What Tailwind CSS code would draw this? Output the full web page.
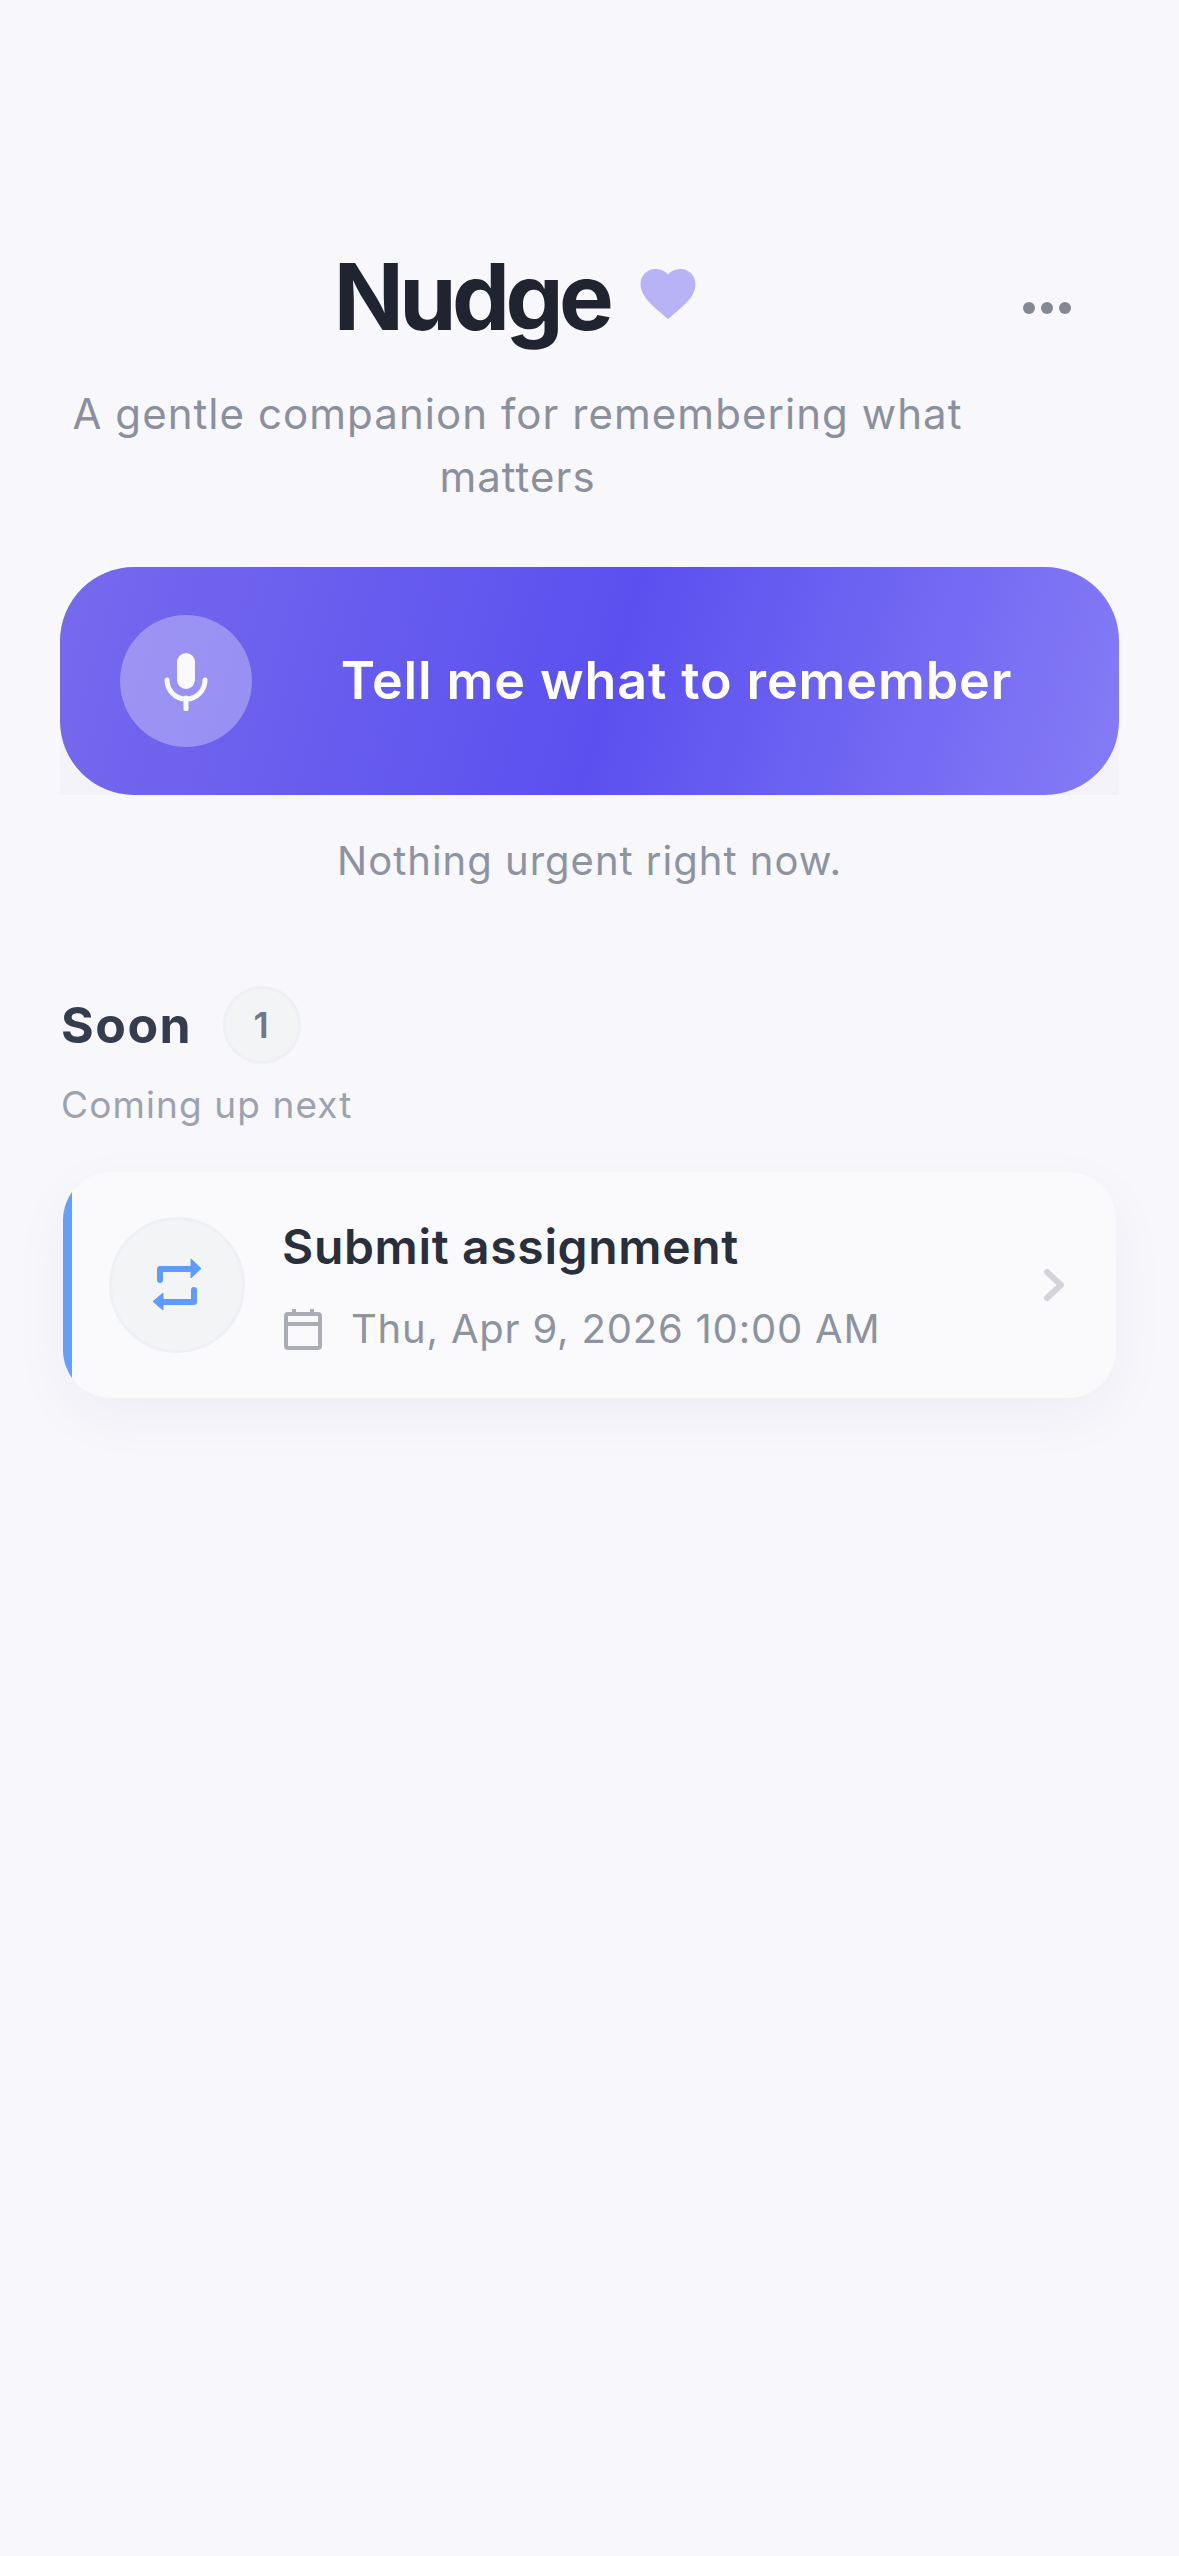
<!DOCTYPE html>
<html lang="en">
<head>
    <meta charset="UTF-8">
    <meta name="viewport" content="width=device-width, initial-scale=1.0">
    <title>Nudge</title>
    <script src="https://cdn.jsdelivr.net/npm/@tailwindcss/browser@4"></script>
</head>
<body class="bg-[#f7f7fc] min-h-screen font-['Inter',sans-serif]">
    <div class="px-[60px] pt-[240px]">
        <!-- Header -->
        <div class="flex items-start">
            <div class="w-[915px] text-center">
                <div class="flex items-center justify-center gap-[26px] h-[114px]">
                    <h1 class="text-[92px] leading-[114px] font-bold tracking-[-4.6px] text-[#1f2430]">Nudge</h1>
                    <svg class="w-[66px] h-[66px] mb-[6px]" viewBox="0 0 24 24" fill="#b8b2f6" stroke="#b8b2f6" stroke-width="0.6" stroke-linejoin="round"><path d="M12 20.8l-1.45-1.32C5.4 15.1 2.3 12.28 2.3 8.5 2.3 5.42 4.72 3.2 7.5 3.2c1.74 0 3.41.81 4.5 2.09C13.09 4.01 14.76 3.2 16.5 3.2c2.78 0 5.2 2.22 5.2 5.3 0 3.78-3.1 6.6-8.25 10.98L12 20.8z"/></svg>
                </div>
                <p class="mt-[28px] text-[42px] leading-[63px] tracking-[1.05px] text-[#8b909c]">A gentle companion for remembering what matters</p>
            </div>
            <button class="ml-[48px] mt-[62px] flex gap-[6px]">
                <span class="w-[12px] h-[12px] rounded-full bg-[#848892]"></span>
                <span class="w-[12px] h-[12px] rounded-full bg-[#848892]"></span>
                <span class="w-[12px] h-[12px] rounded-full bg-[#848892]"></span>
            </button>
        </div>

        <!-- Record button -->
        <div class="mt-[59px] bg-[linear-gradient(180deg,#f7f7fc_55%,#f3f2f9)]">
            <button class="w-full h-[228px] rounded-[74px] flex items-center pl-[60px] pr-[60px] gap-[42px] bg-[linear-gradient(106deg,#766aee_0%,#5b50ef_52%,#857cf6_100%)]">
                <span class="w-[132px] h-[132px] rounded-full bg-white/30 flex items-center justify-center shrink-0">
                    <svg class="w-[48px] h-[60px]" viewBox="0 0 48 60" fill="none">
                        <rect x="15" y="2" width="18" height="36" rx="9" fill="#f9f9ff"/>
                        <path d="M5 29c0 10.5 8.5 19 19 19s19-8.5 19-19" stroke="#f9f9ff" stroke-width="5" stroke-linecap="round"/>
                        <path d="M24 47v11" stroke="#f9f9ff" stroke-width="5" stroke-linecap="round"/>
                    </svg>
                </span>
                <span class="flex-1 text-center text-[52px] font-semibold tracking-[0.9px] text-white">Tell me what to remember</span>
            </button>
        </div>

        <p class="mt-[37px] text-center text-[40px] leading-[57px] tracking-[1px] text-[#8e93a0]">Nothing urgent right now.</p>

        <!-- Soon section -->
        <div class="mt-[97px] pl-[1px]">
            <div class="flex items-center gap-[31px]">
                <h2 class="text-[50px] font-bold tracking-[1.5px] text-[#343c4e]">Soon</h2>
                <span class="w-[78px] h-[78px] rounded-full bg-[#f3f4f6] border-[3px] border-[#eff0f5] flex items-center justify-center text-[36px] font-semibold text-[#737886] pr-[2px]">1</span>
            </div>
            <p class="mt-[17px] text-[37px] leading-[48px] tracking-[1.1px] text-[#9ca3af]">Coming up next</p>
        </div>

        <!-- Card -->
        <div class="mt-[43px] ml-[3px] mr-[3px] h-[226px] relative overflow-hidden rounded-[48px] bg-[#fafafd] shadow-[0_18px_60px_rgba(30,30,60,0.045)] flex items-center pl-[46px] pr-[50px]">
            <span class="absolute left-0 top-0 bottom-0 w-[9px] bg-[#669efb]"></span>
            <span class="w-[136px] h-[136px] rounded-full bg-[#f3f4f6] border-[3px] border-[#eef0f5] flex items-center justify-center shrink-0">
                <svg class="w-[52px] h-[56px]" viewBox="0 0 52 56" fill="none">
                    <path d="M9 23V12H42" stroke="#5f9bfb" stroke-width="6" stroke-linecap="round" stroke-linejoin="round"/>
                    <path d="M40 2L50 11.5L40 21Z" fill="#5f9bfb" stroke="#5f9bfb" stroke-width="1" stroke-linejoin="round"/>
                    <path d="M43 33V45H10" stroke="#5f9bfb" stroke-width="6" stroke-linecap="round" stroke-linejoin="round"/>
                    <path d="M12 36L2 44.5L12 53Z" fill="#5f9bfb" stroke="#5f9bfb" stroke-width="1" stroke-linejoin="round"/>
                </svg>
            </span>
            <div class="flex-1 ml-[37px]">
                <h3 class="text-[48px] leading-[60px] font-semibold tracking-[0.67px] text-[#2a2f3c]">Submit assignment</h3>
                <div class="mt-[28px] flex items-center gap-[29px]">
                    <svg class="w-[38px] h-[42px] ml-[2px]" viewBox="0 0 38 42" fill="none" stroke="#aaadb5" stroke-width="4" stroke-linejoin="round">
                        <rect x="2" y="6" width="34" height="34" rx="2"/>
                        <path d="M2 16H36M10 1V6M28 1V6"/>
                    </svg>
                    <span class="text-[40px] leading-[48px] tracking-[0.8px] text-[#8e93a0]">Thu, Apr 9, 2026 10:00 AM</span>
                </div>
            </div>
            <svg class="w-[24px] h-[36px]" viewBox="0 0 24 36" fill="none" stroke="#d3d4da" stroke-width="6" stroke-linecap="round" stroke-linejoin="round"><path d="M5 5L19 18L5 31"/></svg>
        </div>
    </div>
</body>
</html>
